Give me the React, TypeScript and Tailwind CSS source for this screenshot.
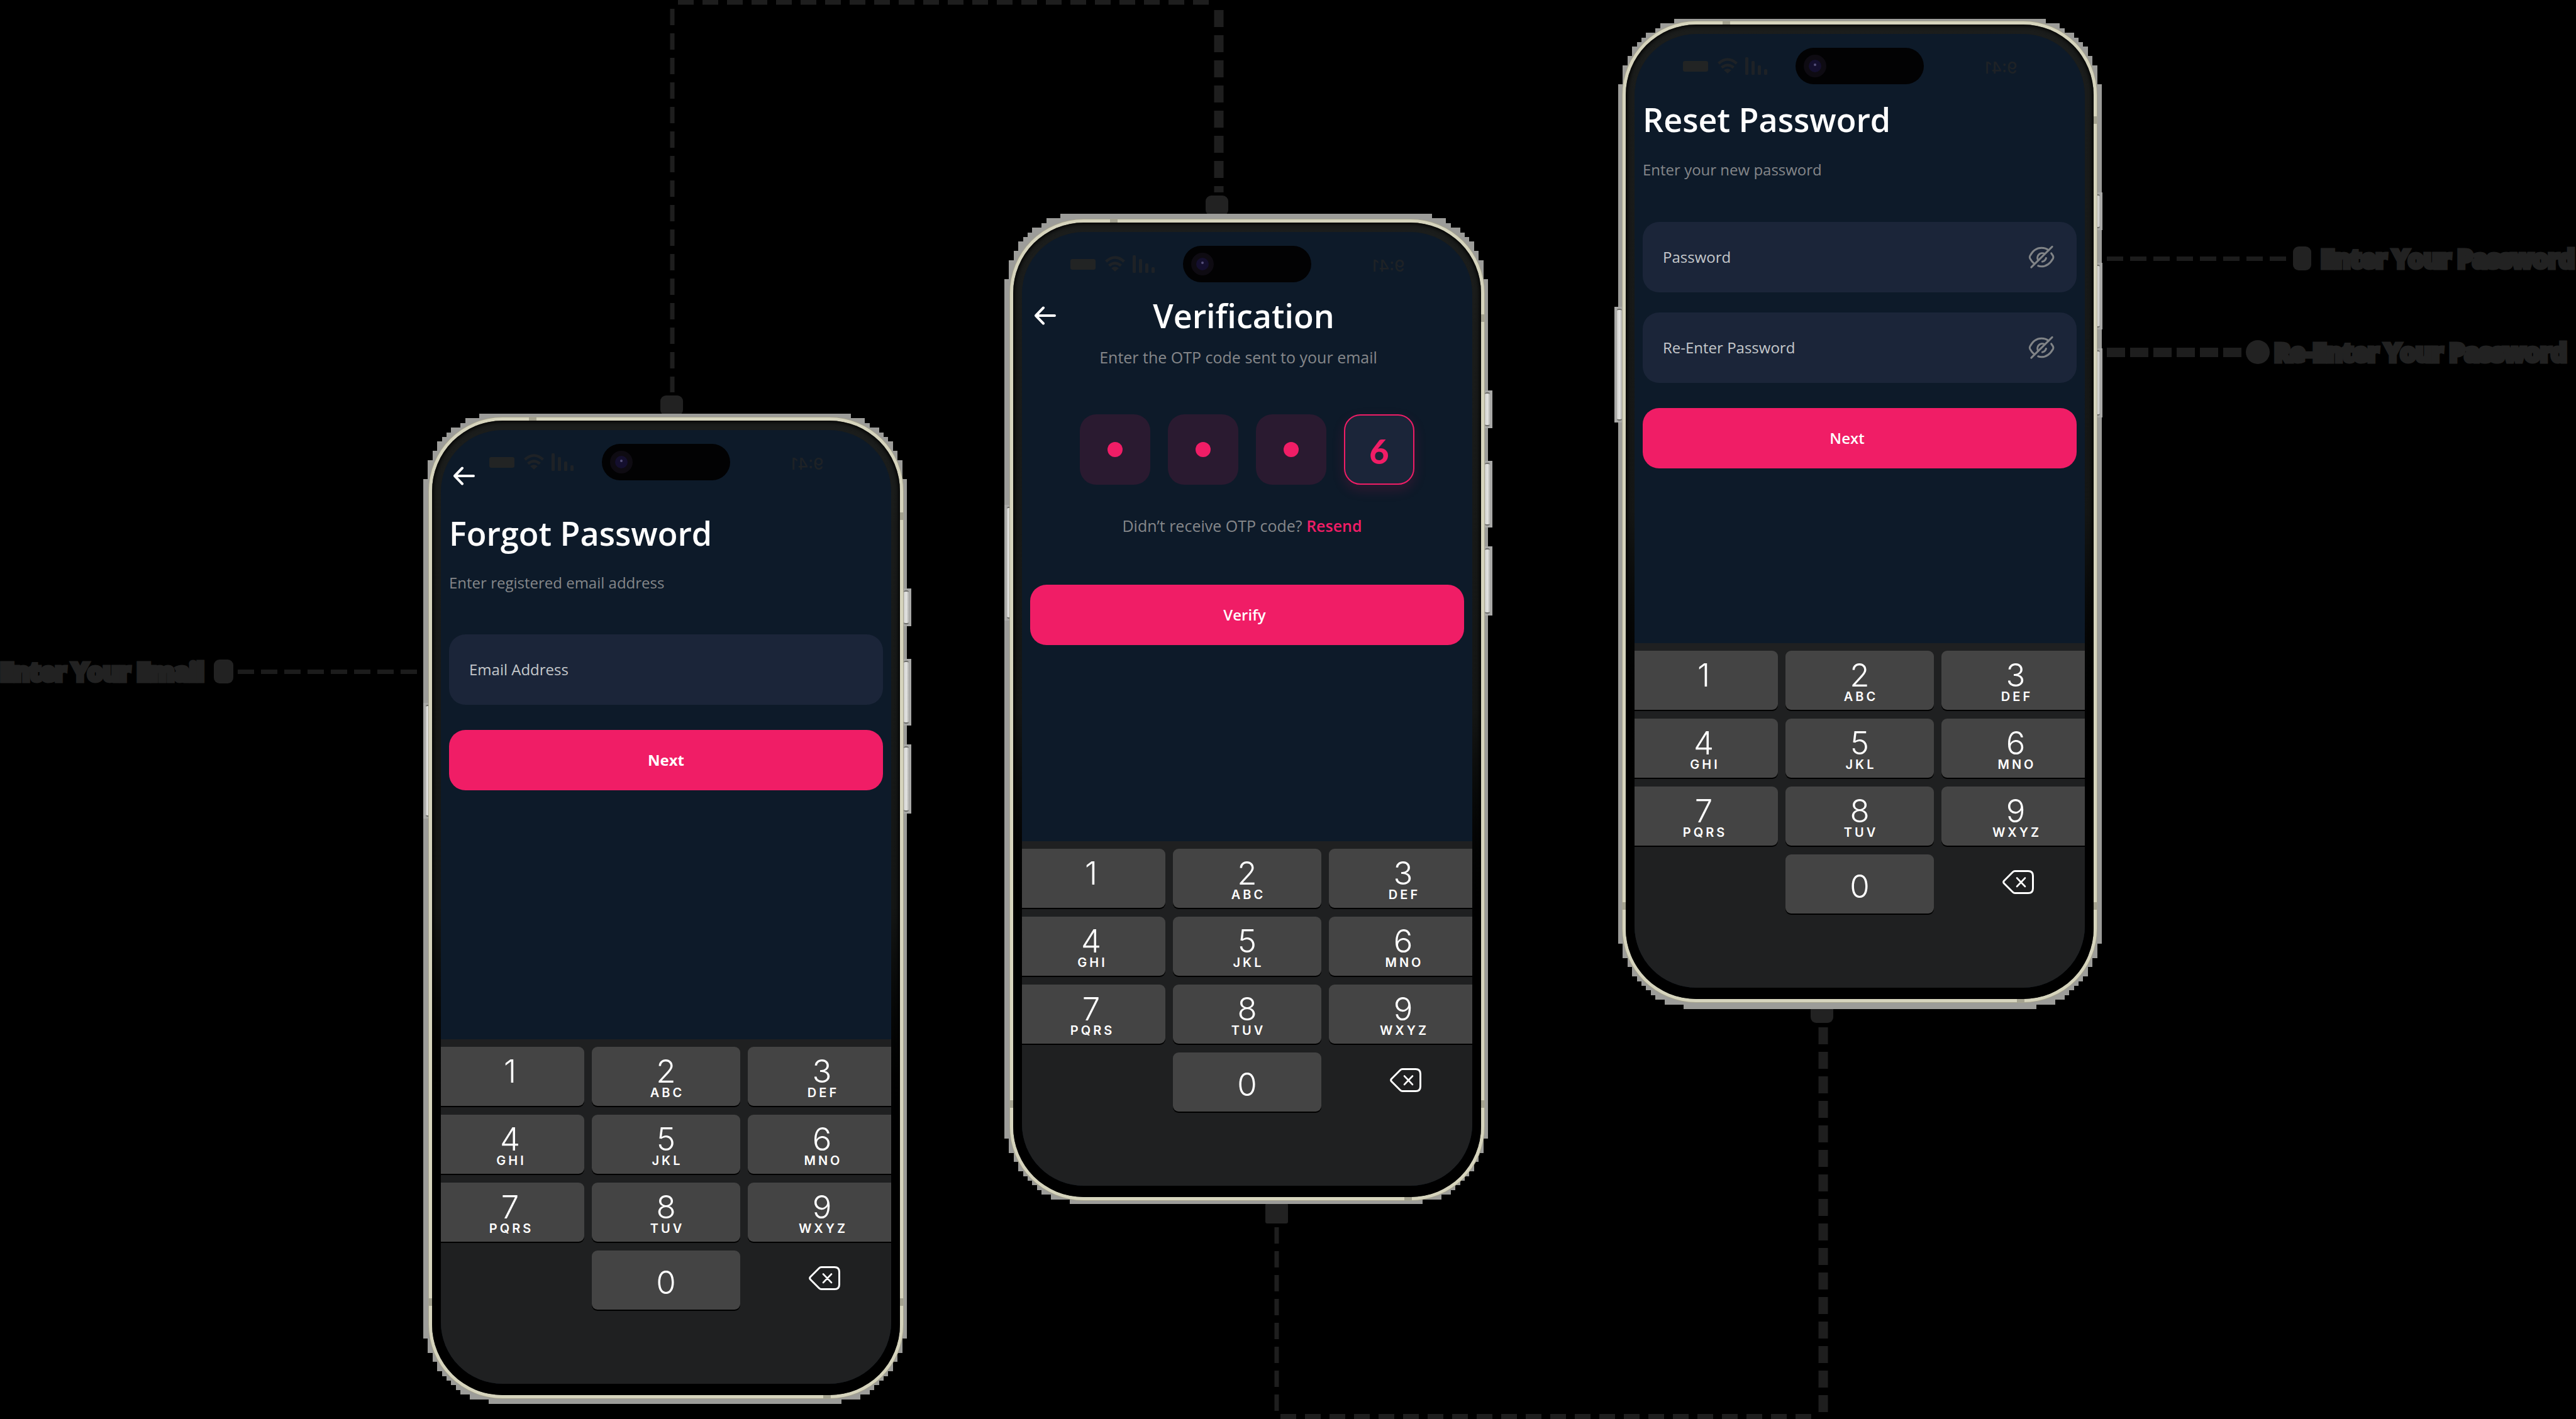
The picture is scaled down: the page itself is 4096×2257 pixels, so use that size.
import type { ReactNode } from "react";

const TOP_STEPS = [12, 9, 8, 6, 5, 4, 3, 3, 2, 2, 1, 1, 1, 1];
const BOTTOM_STEPS = [14, 10, 8, 7, 6, 5, 4, 3, 3, 2, 2, 1, 1, 1];
const COLS = 104;
const ROWS = 213;

/** Blocky outline around the handset, built on a coarse cell grid. */
function outlinePoints() {
  const left: string[] = [];
  const right: string[] = [];
  for (let row = 0; row < ROWS; row++) {
    const fromBottom = ROWS - 1 - row;
    const inset = TOP_STEPS[row] ?? BOTTOM_STEPS[fromBottom] ?? 0;
    right.push(`${COLS - inset},${row}`, `${COLS - inset},${row + 1}`);
    left.unshift(`${inset},${row + 1}`, `${inset},${row}`);
  }
  return [...right, ...left].join(" ");
}

const OUTLINE = outlinePoints();

const KEYS: [string, string][] = [
  ["1", ""],
  ["2", "ABC"],
  ["3", "DEF"],
  ["4", "GHI"],
  ["5", "JKL"],
  ["6", "MNO"],
  ["7", "PQRS"],
  ["8", "TUV"],
  ["9", "WXYZ"],
];

function Digit({ children }: { children: ReactNode }) {
  return <span className="text-[51px] leading-[60px] font-light">{children}</span>;
}

function Keypad() {
  return (
    <div className="mt-auto bg-[#1f2021] pt-3 pb-[118px] font-['Inter',sans-serif] text-white">
      <div className="-mx-2 grid grid-cols-3 gap-x-3 gap-y-[14px]">
        {KEYS.map(([digit, letters]) => (
          <button
            key={digit}
            type="button"
            className="flex h-[94px] flex-col items-center rounded-[9px] bg-[#444444] pt-[9px] shadow-[0_2px_0_#000]"
          >
            <Digit>{digit}</Digit>
            <span className="-mt-2 pl-1 text-[20px] leading-[24px] font-semibold tracking-[4px]">{letters}</span>
          </button>
        ))}
        <button
          type="button"
          className="col-start-2 flex h-[94px] items-center justify-center rounded-[9px] bg-[#444444] pt-2 shadow-[0_2px_0_#000]"
        >
          <Digit>0</Digit>
        </button>
        <button type="button" aria-label="Delete" className="flex items-start justify-center pt-[25px] pl-2">
          <svg width="50" height="38" viewBox="0 0 50 38" fill="none" stroke="white" strokeWidth="3" strokeLinecap="round" strokeLinejoin="round">
            <path d="M20 1.5H41Q48.500 1.500 48.500 9V29Q48.500 36.500 41 36.500H20Q18 36.500 16.500 35L2.500 21Q.8 19 2.500 17L16.500 3Q18 1.500 20 1.500Z" />
            <path d="M23 12.500L36 26M36 12.500L23 26" strokeWidth="2.600" />
          </svg>
        </button>
      </div>
    </div>
  );
}

function StatusBar() {
  return (
    <div className="flex h-20 items-start pt-[22px] pl-[77px] text-[#1e2226]">
      <div className="flex h-[58px] w-[179px] items-center">
        <div className="h-[17px] w-10 rounded-[3px] bg-[#222424]" />
        <svg className="ml-[15px]" width="32" height="26" viewBox="0 0 32 26" fill="none" stroke="currentColor" strokeWidth="4.500">
          <path d="M1.500 9Q16 -4 30.500 9M6.500 15.500Q16 7.500 25.500 15.500" />
          <path d="M16 25L10 19.500Q16 15 22 19.500Z" fill="currentColor" stroke="none" />
        </svg>
        <svg className="ml-3" width="36" height="28" viewBox="0 0 36 28" fill="currentColor">
          <rect x="0" y="0" width="5" height="28" rx="1.500" />
          <rect x="10" y="6" width="5" height="22" rx="1.500" />
          <rect x="20" y="13" width="5" height="15" rx="1.500" />
          <rect x="30" y="19" width="5" height="9" rx="1.500" />
        </svg>
      </div>
      <div className="flex h-[58px] w-[204px] items-center rounded-full bg-[#020203] pl-[13px]">
        <div className="flex size-[36px] items-center justify-center rounded-full bg-[#0e0b12]">
          <div className="flex size-[20px] items-center justify-center rounded-full bg-[#140f2e]">
            <div className="-mt-1 size-[4px] rounded-full bg-[#55507a]" />
          </div>
        </div>
      </div>
      <div className="ml-[97px] flex h-[58px] -scale-x-100 items-center pt-1 font-['Inter',sans-serif] text-[26px] font-medium">9:41</div>
    </div>
  );
}

function BackButton({ className }: { className: string }) {
  return (
    <button type="button" aria-label="Back" className={className}>
      <svg width="34" height="30" viewBox="0 0 34 30" fill="none" stroke="white" strokeWidth="4" strokeLinecap="round" strokeLinejoin="round">
        <path d="M32 15H2M14 2.500L2 15L14 27.500" />
      </svg>
    </button>
  );
}

function Title({ children, className = "" }: { children: ReactNode; className?: string }) {
  return <h1 className={`text-[52px] leading-[64px] font-semibold whitespace-nowrap text-white ${className}`}>{children}</h1>;
}

function Note({ children, className = "text-[24px]" }: { children: ReactNode; className?: string }) {
  return <p className={`leading-9 whitespace-nowrap text-[#85878a] ${className}`}>{children}</p>;
}

function PrimaryButton({ children, className = "" }: { children: ReactNode; className?: string }) {
  return (
    <button type="button" className={`h-24 w-full rounded-[26px] bg-[#f01d66] text-[24px] text-white ${className}`}>
      {children}
    </button>
  );
}

function EyeOff() {
  return (
    <svg width="42" height="38" viewBox="0 0 44 40" fill="none" stroke="#818487" strokeWidth="3.200" strokeLinecap="round" strokeLinejoin="round">
      <path d="M40 2.500L5 37" />
      <path d="M10 31C6.500 28 4.500 25 2.800 22Q1.800 20 2.800 18C7 10 13 4.500 22 4.500C27 4.500 31 6 34 8.500" />
      <path d="M38.500 13.500L41.500 18Q42.300 20 41.500 22C37 30 31 35.500 22 35.500Q19 35.500 16.500 34.500" />
      <path d="M16.500 25.500A8 8 0 0 1 27.500 14.500" />
      <path d="M29.800 21.500A8 8 0 0 1 23.500 27.500" />
    </svg>
  );
}

function Field({ id, label, type, secret = false }: { id: string; label: string; type: string; secret?: boolean }) {
  return (
    <div className="flex h-28 items-center rounded-[26px] bg-[#1b2539] pr-[35px] pl-8">
      <label htmlFor={id} className="text-[24px] leading-9 whitespace-nowrap text-[#c5c8cb]">
        {label}
      </label>
      <input id={id} type={type} className="h-full min-w-0 flex-1 bg-transparent pl-4 text-[24px] text-white outline-none" />
      {secret && (
        <button type="button" aria-label={`Show ${label}`}>
          <EyeOff />
        </button>
      )}
    </div>
  );
}

function SideButton({ className, side }: { className: string; side: "left" | "right" }) {
  return (
    <div className={`absolute flex w-3 bg-[#a9a9a7] ${side === "right" ? "left-full" : "right-full justify-end"} ${className}`}>
      <div className="my-[3px] w-2 rounded-[3px] border-y-2 border-[#6e6e6b] bg-linear-to-r from-[#c9c9c6] via-[#e6e6e4] to-[#b4b4b1]" />
    </div>
  );
}

function Phone({ name, className, halo, left, right, children }: { name: string; className: string; halo: string; left: string; right: string; children: ReactNode }) {
  return (
    <section aria-label={name} className={`relative ${className}`}>
      <svg aria-hidden="true" className={`absolute h-[1575px] w-[769px] ${halo}`} viewBox="0 0 104 213" preserveAspectRatio="none" shapeRendering="crispEdges">
        <polygon points={OUTLINE} fill="#9c9c99" />
      </svg>
      <SideButton side="left" className={`top-[455px] h-[184px] ${left}`} />
      <SideButton side="right" className={`top-[273px] h-[60px] ${right}`} />
      <SideButton side="right" className={`top-[385px] h-[106px] ${right}`} />
      <SideButton side="right" className={`top-[521px] h-[110px] ${right}`} />
      <div className="relative rounded-[118px] bg-[#a8a58f] p-[1px]">
        <div className="rounded-[117px] bg-[#d6d4bd] p-[5px]">
          <div className="rounded-[112px] bg-linear-to-b from-[#1b1d1c] from-0% via-[#141615] via-50% to-black to-80% px-[14px] pt-[15px] pb-[18px] shadow-[inset_0_0_6px_2px_#000]">
            <div className="relative flex min-h-[1517px] flex-col overflow-hidden rounded-[98px] bg-[#0d1a29]">
              <StatusBar />
              {children}
              <Keypad />
            </div>
          </div>
        </div>
        <span className="absolute top-0 left-[160px] h-[6px] w-3 bg-[#a5a390]" />
        <span className="absolute top-[152px] right-0 h-3 w-[6px] bg-[#a5a390]" />
        <span className="absolute bottom-[148px] left-0 h-3 w-[6px] bg-[#a5a390]" />
        <span className="absolute right-0 bottom-[148px] h-3 w-[6px] bg-[#a5a390]" />
        <span className="absolute right-[116px] bottom-0 h-[6px] w-3 bg-[#a5a390]" />
      </div>
    </section>
  );
}

function Connectors() {
  return (
    <svg aria-hidden="true" className="absolute inset-0 h-full w-full" viewBox="0 0 4096 2257" preserveAspectRatio="none" fill="none" stroke="#1e1e1e">
      <path d="M1069 14V624" strokeWidth="7" strokeDasharray="26 13" />
      <path d="M1078 3.500H1932" strokeWidth="8" strokeDasharray="25 14" />
      <path d="M1938 16V306" strokeWidth="15" strokeDasharray="27 13" />
      <path d="M2030 1952V2249" strokeWidth="7" strokeDasharray="26 12" />
      <path d="M2036 2253H2892" strokeWidth="8" strokeDasharray="25 14" />
      <path d="M2899 1634V2249" strokeWidth="15" strokeDasharray="27 12" />
      <g fill="#222222" stroke="none">
        <rect x="1050" y="629" width="36" height="32" rx="9" />
        <rect x="1917" y="311" width="36" height="32" rx="9" />
        <rect x="2012" y="1914" width="36" height="32" rx="3" />
        <rect x="2879" y="1595" width="36" height="32" rx="9" />
      </g>
    </svg>
  );
}

const THIN_DASH = "h-[7px] bg-[repeating-linear-gradient(90deg,#1c1c1c_0_26px,transparent_26px_37px)]";
const THICK_DASH = "h-[15px] bg-[repeating-linear-gradient(90deg,#1e1e1e_0_29px,transparent_29px_37px)]";

function Caption({ children }: { children: ReactNode }) {
  return (
    <span className="shrink-0 text-[39px] leading-[38px] font-bold whitespace-nowrap text-[#222222] [-webkit-text-stroke:7px_#222222]">
      {children}
    </span>
  );
}

export default function App() {
  return (
    <main className="relative min-h-screen overflow-hidden bg-black font-['Open_Sans',sans-serif]">
      <Connectors />
      <div className="relative grid grid-cols-[681fr_756fr_168fr_756fr_218fr_756fr_761fr] items-start">
        <div className="mt-[1049px] flex items-center">
          <Caption>Enter Your Email</Caption>
          <span className="ml-[15px] h-[38px] w-[31px] shrink-0 rounded-[9px] bg-[#222222]" />
          <span className={`mr-[12px] ml-[7px] flex-1 ${THIN_DASH}`} />
        </div>

        <Phone name="Forgot Password" className="mt-[663px]" halo="-top-[5px] -left-2" left="-mr-1" right="">
          <BackButton className="absolute top-[58px] left-5" />
          <div className="px-[13px] pt-[52px]">
            <Title>Forgot Password</Title>
            <Note className="mt-[29px] mb-16 text-[24px]">Enter registered email address</Note>
            <Field id="email" label="Email Address" type="email" />
            <PrimaryButton className="mt-10 font-bold">Next</PrimaryButton>
          </div>
        </Phone>

        <Phone name="Verification" className="col-start-4 mt-[348px]" halo="-top-2 -left-2" left="-mr-1" right="">
          <div className="px-[13px] pt-[21px]">
            <div className="flex items-center">
              <BackButton className="ml-[7px]" />
              <Title className="flex-1 pr-[52px] text-center">Verification</Title>
            </div>
            <Note className="mt-4 pr-7 text-center text-[25px]">Enter the OTP code sent to your email</Note>
            <div className="mt-[73px] flex justify-center gap-7">
              {[1, 2, 3].map((n) => (
                <div key={n} className="flex size-28 items-center justify-center rounded-[26px] bg-[#2a1a30]">
                  <span className="size-6 rounded-full bg-[#f01d66]" />
                </div>
              ))}
              <input
                aria-label="Digit 4"
                defaultValue="6"
                inputMode="numeric"
                maxLength={1}
                className="size-28 rounded-[26px] border-2 border-[#f01d66] bg-[#1b2539] pt-1 text-center font-['Lato',sans-serif] text-[54px] font-black text-[#f01d66] shadow-[0_8px_20px_rgba(240,29,102,0.15)] outline-none"
              />
            </div>
            <Note className="mt-[47px] pr-4 text-center text-[25px]">
              Didn’t receive OTP code?{" "}
              <a href="#resend" className="font-semibold text-[#f01d66]">
                Resend
              </a>
            </Note>
            <PrimaryButton className="mt-[76px] pr-2 font-semibold">Verify</PrimaryButton>
          </div>
        </Phone>

        <Phone name="Reset Password" className="col-start-6 mt-[33px]" halo="-top-[3px] -left-[6px]" left="" right="-ml-1">
          <div className="px-[13px] pt-6">
            <Title>Reset Password</Title>
            <Note className="mt-[30px] mb-[65px] text-[24px]">Enter your new password</Note>
            <div className="flex flex-col gap-8">
              <Field id="password" label="Password" type="password" secret />
              <Field id="confirm" label="Re-Enter Password" type="password" secret />
            </div>
            <PrimaryButton className="mt-10 pr-10 font-semibold">Next</PrimaryButton>
          </div>
        </Phone>

        <div className="mt-[392px] overflow-hidden pl-[15px]">
          <div className="flex items-center">
            <span className={`w-[288px] shrink-0 ${THIN_DASH}`} />
            <span className="mr-[15px] ml-2 h-[38px] w-[29px] shrink-0 rounded-[9px] bg-[#222222]" />
            <Caption>Enter Your Password</Caption>
          </div>
          <div className="mt-[111px] flex items-center">
            <span className={`w-[214px] shrink-0 ${THICK_DASH}`} />
            <span className="mr-[7px] ml-[7px] size-[38px] shrink-0 rounded-full bg-[#222222]" />
            <Caption>Re-Enter Your Password</Caption>
          </div>
        </div>
      </div>
    </main>
  );
}
